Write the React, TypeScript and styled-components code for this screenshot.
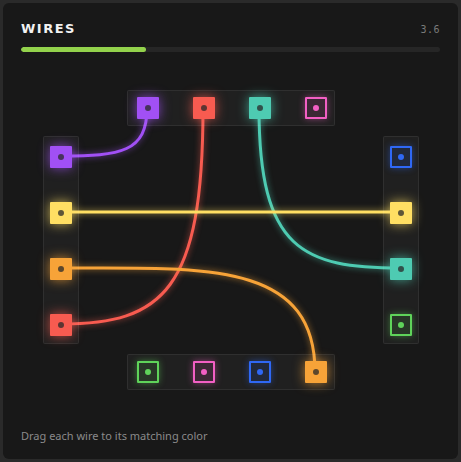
import styled, { createGlobalStyle } from "styled-components";

const GlobalStyle = createGlobalStyle`
  html, body {
    margin: 0;
    padding: 0;
    background: #2a2a2a;
  }
  * {
    box-sizing: border-box;
  }
`;

const COLORS = {
  purple: "#a150f5",
  red: "#f75b50",
  teal: "#4ecbb2",
  pink: "#f25fc4",
  yellow: "#ffdf63",
  orange: "#f7a338",
  blue: "#2f68f5",
  green: "#5fd35a",
};

type Port = { color: string; linked: boolean };

const topPorts: Port[] = [
  { color: COLORS.purple, linked: true },
  { color: COLORS.red, linked: true },
  { color: COLORS.teal, linked: true },
  { color: COLORS.pink, linked: false },
];

const leftPorts: Port[] = [
  { color: COLORS.purple, linked: true },
  { color: COLORS.yellow, linked: true },
  { color: COLORS.orange, linked: true },
  { color: COLORS.red, linked: true },
];

const rightPorts: Port[] = [
  { color: COLORS.blue, linked: false },
  { color: COLORS.yellow, linked: true },
  { color: COLORS.teal, linked: true },
  { color: COLORS.green, linked: false },
];

const bottomPorts: Port[] = [
  { color: COLORS.green, linked: false },
  { color: COLORS.pink, linked: false },
  { color: COLORS.blue, linked: false },
  { color: COLORS.orange, linked: true },
];

const wires = [
  { color: COLORS.purple, d: "M104 18 C104 62, 78 66, 18 66" },
  { color: COLORS.red, d: "M160 18 C160 200, 120 234, 18 234" },
  { color: COLORS.teal, d: "M216 18 C216 160, 260 178, 358 178" },
  { color: COLORS.yellow, d: "M18 122 L358 122" },
  { color: COLORS.orange, d: "M18 178 C160 178, 272 170, 272 282" },
];

const Card = styled.div`
  margin: 3px;
  width: 455px;
  height: 456px;
  background: #181818;
  border-radius: 6px;
  padding: 17px 18px 0 18px;
  font-family: "Noto Sans", "DejaVu Sans", sans-serif;
`;

const Header = styled.div`
  display: flex;
  justify-content: space-between;
  align-items: baseline;
  height: 16px;
`;

const Title = styled.h1`
  margin: 0;
  font-family: "DejaVu Sans", sans-serif;
  font-size: 13px;
  line-height: 17px;
  font-weight: 700;
  letter-spacing: 1.5px;
  color: #f2f2f2;
`;

const Level = styled.span`
  font-family: "DejaVu Sans Mono", monospace;
  font-size: 10px;
  color: #7a7a7a;
  letter-spacing: 0.5px;
`;

const Track = styled.div`
  margin-top: 11px;
  height: 5px;
  border-radius: 3px;
  background: #262626;
  overflow: hidden;
`;

const Fill = styled.div`
  height: 100%;
  border-radius: 3px;
  background: #93d24c;
`;

const Board = styled.div`
  position: relative;
  width: 376px;
  height: 300px;
  margin: 38px auto 0 auto;
`;

const WireLayer = styled.svg`
  position: absolute;
  inset: 0;
  overflow: visible;
`;

const Grid = styled.div`
  position: relative;
  display: grid;
  grid-template-columns: 36px 1fr 36px;
  grid-template-rows: 36px 208px 36px;
  row-gap: 10px;
  height: 100%;
`;

const Strip = styled.div<{ $vertical?: boolean; $col: number; $row: number }>`
  grid-column: ${(p) => p.$col};
  grid-row: ${(p) => p.$row};
  justify-self: center;
  display: flex;
  flex-direction: ${(p) => (p.$vertical ? "column" : "row")};
  align-items: center;
  gap: 34px;
  padding: 9px;
  width: ${(p) => (p.$vertical ? "36px" : "208px")};
  height: ${(p) => (p.$vertical ? "208px" : "36px")};
  background: rgba(255, 255, 255, 0.035);
  border: 1px solid rgba(255, 255, 255, 0.07);
  border-radius: 2px;
`;

const Socket = styled.div<{ $color: string; $linked: boolean }>`
  flex: 0 0 22px;
  width: 22px;
  height: 22px;
  display: flex;
  align-items: center;
  justify-content: center;
  border-radius: 1px;
  background: ${(p) => (p.$linked ? p.$color : `${p.$color}22`)};
  border: ${(p) => (p.$linked ? "none" : `2px solid ${p.$color}`)};
  box-shadow: 0 0 ${(p) => (p.$linked ? "12px" : "7px")}
    ${(p) => (p.$linked ? `${p.$color}bb` : `${p.$color}77`)};
`;

const Dot = styled.span<{ $color: string; $linked: boolean }>`
  width: 6px;
  height: 6px;
  border-radius: 50%;
  background: ${(p) => (p.$linked ? "rgba(40, 40, 40, 0.75)" : p.$color)};
`;

const Hint = styled.p`
  margin: 39px 0 0 0;
  font-size: 11px;
  line-height: 14px;
  color: #8a8a8a;
`;

const Sockets = ({ ports }: { ports: Port[] }) => (
  <>
    {ports.map((port, i) => (
      <Socket key={i} $color={port.color} $linked={port.linked}>
        <Dot $color={port.color} $linked={port.linked} />
      </Socket>
    ))}
  </>
);

export default function App() {
  const progress = 29.8;

  return (
    <>
      <GlobalStyle />
      <Card>
        <Header>
          <Title>WIRES</Title>
          <Level>3.6</Level>
        </Header>
        <Track>
          <Fill style={{ width: `${progress}%` }} />
        </Track>
        <Board>
          <WireLayer width="376" height="300" viewBox="0 0 376 300">
            {wires.map((w, i) => (
              <path
                key={i}
                d={w.d}
                fill="none"
                stroke={w.color}
                strokeWidth={3}
                strokeLinecap="round"
                style={{ filter: `drop-shadow(0 0 3px ${w.color}aa)` }}
              />
            ))}
          </WireLayer>
          <Grid>
            <Strip $col={2} $row={1}>
              <Sockets ports={topPorts} />
            </Strip>
            <Strip $vertical $col={1} $row={2}>
              <Sockets ports={leftPorts} />
            </Strip>
            <Strip $vertical $col={3} $row={2}>
              <Sockets ports={rightPorts} />
            </Strip>
            <Strip $col={2} $row={3}>
              <Sockets ports={bottomPorts} />
            </Strip>
          </Grid>
        </Board>
        <Hint>Drag each wire to its matching color</Hint>
      </Card>
    </>
  );
}
